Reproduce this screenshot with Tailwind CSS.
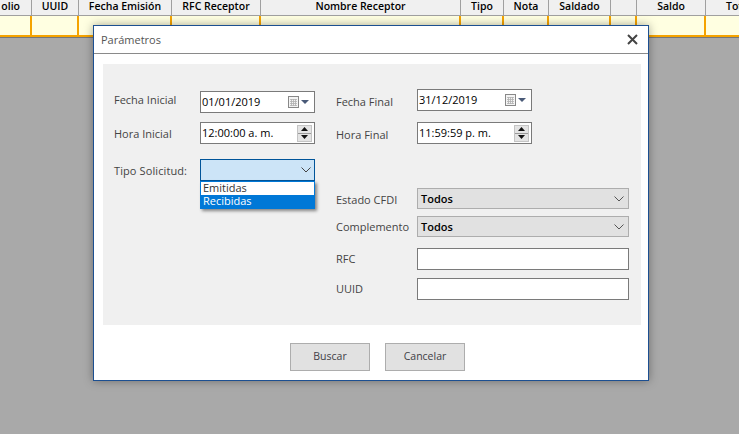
<!DOCTYPE html>
<html lang="es">
<head>
<meta charset="UTF-8">
<title>Parámetros</title>
<script src="https://cdn.jsdelivr.net/npm/@tailwindcss/browser@4"></script>
</head>
<body class="font-['Open_Sans',sans-serif] text-[11px] text-[#3f3f46]">
<div class="relative w-[739px] h-[434px] overflow-hidden bg-[#a9a9a9]">

  <!-- tabla de fondo -->
  <div class="flex h-[16px] bg-[#f0f0f0] border-b border-[#a0a0a0] font-semibold text-[10.5px] leading-[13px] text-black text-center">
    <div class="w-[32px] shrink-0 border-r border-[#a0a0a0] flex justify-end pr-[11px] whitespace-nowrap">olio</div>
    <div class="w-[47px] shrink-0 border-r border-[#a0a0a0]">UUID</div>
    <div class="w-[93px] shrink-0 border-r border-[#a0a0a0]">Fecha Emisión</div>
    <div class="w-[89px] shrink-0 border-r border-[#a0a0a0]">RFC Receptor</div>
    <div class="w-[200px] shrink-0 border-r border-[#a0a0a0]">Nombre Receptor</div>
    <div class="w-[43px] shrink-0 border-r border-[#a0a0a0]">Tipo</div>
    <div class="w-[45px] shrink-0 border-r border-[#a0a0a0]">Nota</div>
    <div class="w-[62px] shrink-0 border-r border-[#a0a0a0]">Saldado</div>
    <div class="w-[26px] shrink-0 border-r border-[#a0a0a0]"></div>
    <div class="w-[69px] shrink-0 border-r border-[#a0a0a0]">Saldo</div>
    <div class="flex-1 text-left pl-[20px] overflow-hidden whitespace-nowrap">Total</div>
  </div>
  <div class="flex h-[21px] bg-[#ffffe1] border-b-[2px] border-[#f5a300] shadow-[0_1px_0_#777]">
    <div class="w-[32px] shrink-0 border-r-[2px] border-[#f5a300]"></div>
    <div class="w-[47px] shrink-0 border-r-[2px] border-[#f5a300]"></div>
    <div class="w-[93px] shrink-0 border-r-[2px] border-[#f5a300]"></div>
    <div class="w-[89px] shrink-0 border-r-[2px] border-[#f5a300]"></div>
    <div class="w-[200px] shrink-0 border-r-[2px] border-[#f5a300]"></div>
    <div class="w-[43px] shrink-0 border-r-[2px] border-[#f5a300]"></div>
    <div class="w-[45px] shrink-0 border-r-[2px] border-[#f5a300]"></div>
    <div class="w-[62px] shrink-0 border-r-[2px] border-[#f5a300]"></div>
    <div class="w-[26px] shrink-0 border-r-[2px] border-[#f5a300]"></div>
    <div class="w-[69px] shrink-0 border-r-[2px] border-[#f5a300]"></div>
  </div>

  <!-- ventana -->
  <div class="absolute left-[93px] top-[25px] w-[556px] h-[356px] bg-white border border-[#1c4f91] shadow-[0_0_9px_rgba(0,0,0,0.35)] flex flex-col">
    <div class="h-[28px] shrink-0 border-b-[1px] border-[#8a8a8a] flex items-center justify-between pl-[7px] pr-[10px] text-[#555]">
      <span class="mt-[2px]">Parámetros</span>
      <svg width="11" height="11" viewBox="0 0 11 11"><path d="M1 1 10 10M10 1 1 10" stroke="#444" stroke-width="2" fill="none"/></svg>
    </div>

    <div class="relative ml-[9px] mr-[7px] mt-[10px] h-[261px] bg-[#f0f0f0] flex text-[#444]">
      <!-- columna izquierda -->
      <div class="w-[234px] shrink-0 pl-[11px] pt-[27px]">
        <div class="flex items-center h-[22px]">
          <span class="w-[86px] -mt-[3px]">Fecha Inicial</span>
          <div class="w-[115px] h-[22px] bg-white border border-[#7a7a7a] flex items-center pl-[1px] pr-[4px] text-black">
            <span class="flex-1">01/01/2019</span>
            <svg width="22" height="12" viewBox="0 0 22 12"><rect x="0.500" y="0.500" width="10" height="11" fill="#f4f4f4" stroke="#888"/><path d="M2 3.500h7M2 5.500h7M2 7.500h7M2 9.500h7M3.500 3v7M5.500 3v7M7.500 3v7" stroke="#b0b0b0" stroke-width="0.8"/><path d="M13 4h8l-4 4z" fill="#4a5a78"/></svg>
          </div>
        </div>
        <div class="flex items-center h-[22px] mt-[9px]">
          <span class="w-[86px] mt-[2px]">Hora Inicial</span>
          <div class="w-[115px] h-[22px] bg-white border border-[#7a7a7a] flex items-center pl-[1px] pr-[2px] text-black">
            <span class="flex-1">12:00:00 a. m.</span>
            <div class="w-[15px] h-[17px] flex flex-col bg-[#e4e4e4] border border-[#c4c4c4]">
              <div class="flex-1 flex items-center justify-center border-b border-[#999]"><svg width="7" height="4" viewBox="0 0 7 4"><path d="M3.500 0 7 4H0z" fill="#111"/></svg></div>
              <div class="flex-1 flex items-center justify-center"><svg width="7" height="4" viewBox="0 0 7 4"><path d="M0 0h7L3.500 4z" fill="#111"/></svg></div>
            </div>
          </div>
        </div>
        <div class="flex items-center h-[22px] mt-[15px]">
          <span class="w-[86px] mt-[2px] tracking-[0.1px]">Tipo Solicitud:</span>
          <div class="w-[115px] h-[22px] bg-[#cce4f7] border border-[#005499] flex items-center justify-end pr-[3px]">
            <svg width="10" height="6" viewBox="0 0 10 6"><path d="M0.500 0.500l4.500 4.500 4.500-4.500" stroke="#444" fill="none"/></svg>
          </div>
        </div>
      </div>

      <!-- columna derecha -->
      <div class="flex-1 pt-[25px]">
        <div class="flex items-center h-[22px]">
          <span class="w-[80px] -ml-px mr-px mt-[4px]">Fecha Final</span>
          <div class="w-[115px] h-[22px] bg-white border border-[#7a7a7a] flex items-center pl-[1px] pr-[4px] text-black">
            <span class="flex-1">31/12/2019</span>
            <svg width="22" height="12" viewBox="0 0 22 12"><rect x="0.500" y="0.500" width="10" height="11" fill="#f4f4f4" stroke="#888"/><path d="M2 3.500h7M2 5.500h7M2 7.500h7M2 9.500h7M3.500 3v7M5.500 3v7M7.500 3v7" stroke="#b0b0b0" stroke-width="0.8"/><path d="M13 4h8l-4 4z" fill="#4a5a78"/></svg>
          </div>
        </div>
        <div class="flex items-center h-[22px] mt-[11px]">
          <span class="w-[80px] -ml-px mr-px mt-[4px]">Hora Final</span>
          <div class="w-[115px] h-[22px] bg-white border border-[#7a7a7a] flex items-center pl-[1px] pr-[2px] text-black">
            <span class="flex-1">11:59:59 p. m.</span>
            <div class="w-[15px] h-[17px] flex flex-col bg-[#e4e4e4] border border-[#c4c4c4]">
              <div class="flex-1 flex items-center justify-center border-b border-[#999]"><svg width="7" height="4" viewBox="0 0 7 4"><path d="M3.500 0 7 4H0z" fill="#111"/></svg></div>
              <div class="flex-1 flex items-center justify-center"><svg width="7" height="4" viewBox="0 0 7 4"><path d="M0 0h7L3.500 4z" fill="#111"/></svg></div>
            </div>
          </div>
        </div>
        <div class="flex items-center h-[21px] mt-[44px]">
          <span class="w-[80px] -ml-px mr-px mt-[4px]">Estado CFDI</span>
          <div class="w-[212px] h-[21px] bg-[#e1e1e1] border border-[#adadad] flex items-center justify-between pl-[3px] pr-[4px] text-black font-semibold">
            <span class="mt-[2px]">Todos</span>
            <svg width="10" height="6" viewBox="0 0 10 6"><path d="M0.500 0.500l4.500 4.500 4.500-4.500" stroke="#555" fill="none"/></svg>
          </div>
        </div>
        <div class="flex items-center h-[21px] mt-[7px]">
          <span class="w-[80px] -ml-px mr-px mt-[2px]">Complemento</span>
          <div class="w-[212px] h-[21px] bg-[#e1e1e1] border border-[#adadad] flex items-center justify-between pl-[3px] pr-[4px] text-black font-semibold">
            <span class="mt-[2px]">Todos</span>
            <svg width="10" height="6" viewBox="0 0 10 6"><path d="M0.500 0.500l4.500 4.500 4.500-4.500" stroke="#555" fill="none"/></svg>
          </div>
        </div>
        <div class="flex items-center h-[22px] mt-[11px]">
          <span class="w-[80px] -ml-px mr-px">RFC</span>
          <div class="w-[212px] h-[22px] bg-white border border-[#7a7a7a]"></div>
        </div>
        <div class="flex items-center h-[22px] mt-[8px]">
          <span class="w-[80px] -ml-px mr-px">UUID</span>
          <div class="w-[212px] h-[22px] bg-white border border-[#7a7a7a]"></div>
        </div>
      </div>

      <!-- lista desplegada -->
      <div class="absolute left-[97px] top-[117px] w-[115px] h-[28px] bg-white border border-[#0078d7] shadow-[2px_2px_3px_rgba(0,0,0,0.45)] text-[#333]">
        <div class="h-[13px] pl-[2px] leading-[11px]">Emitidas</div>
        <div class="h-[13px] pl-[2px] leading-[11px] bg-[#0078d7] text-white">Recibidas</div>
      </div>
    </div>

    <div class="flex gap-[15px] pl-[196px] pt-[18px]">
      <div class="w-[80px] h-[28px] bg-[#e1e1e1] border border-[#adadad] flex items-center justify-center text-[10.5px]">Buscar</div>
      <div class="w-[80px] h-[28px] bg-[#e1e1e1] border border-[#adadad] flex items-center justify-center text-[10.5px]">Cancelar</div>
    </div>
  </div>
</div>
</body>
</html>
